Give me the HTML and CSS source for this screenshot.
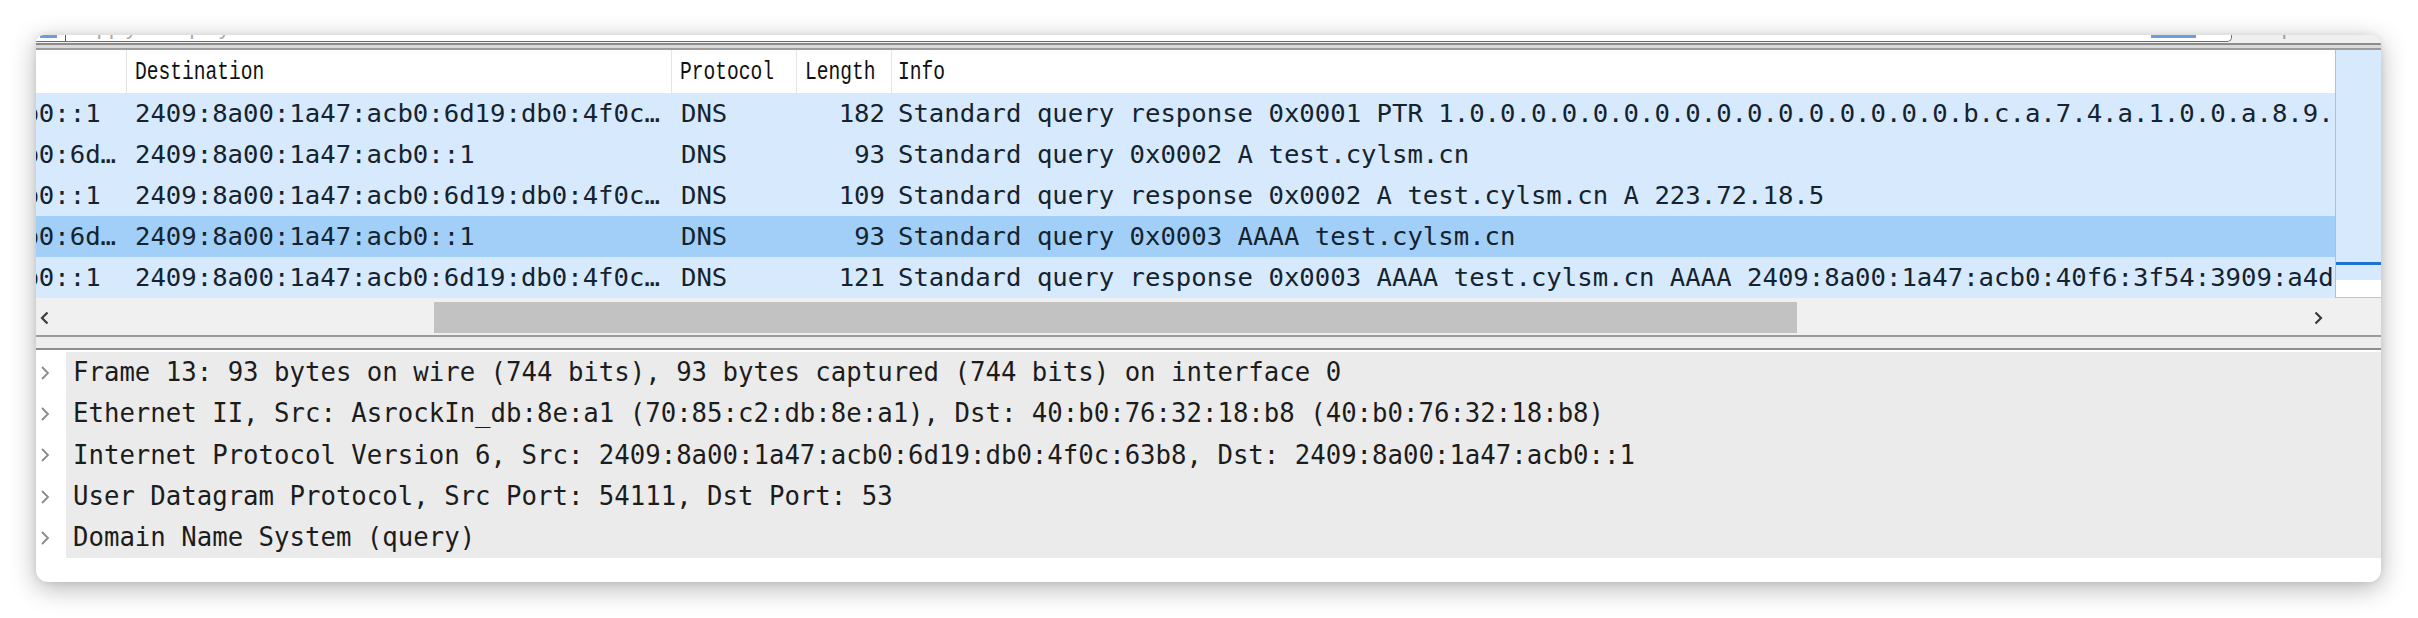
FILE: index.html
```html
<!DOCTYPE html>
<html>
<head>
<meta charset="utf-8">
<link rel="stylesheet" href="styles.css">
</head>
<body>
<div class="page">
  <div class="card">
    <div class="filterbar">
      <div class="fb-input">
        <div class="fb-bookmark"></div>
        <div class="fb-sep"></div>
        <div class="fb-placeholder"><span>Apply a display filter … &lt;Ctrl-/&gt;</span></div>
        <div class="fb-apply"></div>
      </div>
      <div class="fb-expr"><span>Expression…</span></div>
    </div>
    <div class="topline"></div>

    <div class="plist">
      <div class="plist-viewport">
        <div class="plist-inner">
          <div class="prow head">
            <div class="hc"><span class="ht">Source</span></div>
            <div class="hc"><span class="ht">Destination</span></div>
            <div class="hc"><span class="ht">Protocol</span></div>
            <div class="hc"><span class="ht">Length</span></div>
            <div class="hc"><span class="ht">Info</span></div>
          </div>
          <div class="prow dns">
            <div class="c src">2409:8a00:1a47:acb0::1</div>
            <div class="c dst">2409:8a00:1a47:acb0:6d19:db0:4f0c…</div>
            <div class="c proto">DNS</div>
            <div class="c len">182</div>
            <div class="c info">Standard query response 0x0001 PTR 1.0.0.0.0.0.0.0.0.0.0.0.0.0.0.0.0.b.c.a.7.4.a.1.0.0.a.8.9.0.4.2.ip6.arpa</div>
          </div>
          <div class="prow dns">
            <div class="c src">2409:8a00:1a47:acb0:6d…</div>
            <div class="c dst">2409:8a00:1a47:acb0::1</div>
            <div class="c proto">DNS</div>
            <div class="c len">93</div>
            <div class="c info">Standard query 0x0002 A test.cylsm.cn</div>
          </div>
          <div class="prow dns">
            <div class="c src">2409:8a00:1a47:acb0::1</div>
            <div class="c dst">2409:8a00:1a47:acb0:6d19:db0:4f0c…</div>
            <div class="c proto">DNS</div>
            <div class="c len">109</div>
            <div class="c info">Standard query response 0x0002 A test.cylsm.cn A 223.72.18.5</div>
          </div>
          <div class="prow dns selected">
            <div class="c src">2409:8a00:1a47:acb0:6d…</div>
            <div class="c dst">2409:8a00:1a47:acb0::1</div>
            <div class="c proto">DNS</div>
            <div class="c len">93</div>
            <div class="c info">Standard query 0x0003 AAAA test.cylsm.cn</div>
          </div>
          <div class="prow dns">
            <div class="c src">2409:8a00:1a47:acb0::1</div>
            <div class="c dst">2409:8a00:1a47:acb0:6d19:db0:4f0c…</div>
            <div class="c proto">DNS</div>
            <div class="c len">121</div>
            <div class="c info">Standard query response 0x0003 AAAA test.cylsm.cn AAAA 2409:8a00:1a47:acb0:40f6:3f54:3909:a4d1</div>
          </div>
        </div>
      </div>
      <div class="minimap">
        <div class="mm-fill"></div>
        <div class="mm-mark"></div>
        <div class="mm-fill2"></div>
        <div class="mm-empty"></div>
      </div>
    </div>

    <div class="hscroll">
      <div class="sbtn">
        <svg width="9" height="14" viewBox="0 0 9 14"><polyline points="7.5,1.5 2,7 7.5,12.5" fill="none" stroke="#3a3a3a" stroke-width="2.2"/></svg>
      </div>
      <div class="track"><div class="thumb"></div></div>
      <div class="sbtn">
        <svg width="9" height="14" viewBox="0 0 9 14"><polyline points="1.5,1.5 7,7 1.5,12.5" fill="none" stroke="#3a3a3a" stroke-width="2.2"/></svg>
      </div>
      <div class="corner"></div>
    </div>

    <div class="splitter"></div>

    <div class="details">
      <div class="drow"><div class="chev"><svg width="10" height="16" viewBox="0 0 10 16"><polyline points="2,2 8,8 2,14" fill="none" stroke="#8a8a8a" stroke-width="1.8"/></svg></div><div class="dtext">Frame 13: 93 bytes on wire (744 bits), 93 bytes captured (744 bits) on interface 0</div></div>
      <div class="drow"><div class="chev"><svg width="10" height="16" viewBox="0 0 10 16"><polyline points="2,2 8,8 2,14" fill="none" stroke="#8a8a8a" stroke-width="1.8"/></svg></div><div class="dtext">Ethernet II, Src: AsrockIn_db:8e:a1 (70:85:c2:db:8e:a1), Dst: 40:b0:76:32:18:b8 (40:b0:76:32:18:b8)</div></div>
      <div class="drow"><div class="chev"><svg width="10" height="16" viewBox="0 0 10 16"><polyline points="2,2 8,8 2,14" fill="none" stroke="#8a8a8a" stroke-width="1.8"/></svg></div><div class="dtext">Internet Protocol Version 6, Src: 2409:8a00:1a47:acb0:6d19:db0:4f0c:63b8, Dst: 2409:8a00:1a47:acb0::1</div></div>
      <div class="drow"><div class="chev"><svg width="10" height="16" viewBox="0 0 10 16"><polyline points="2,2 8,8 2,14" fill="none" stroke="#8a8a8a" stroke-width="1.8"/></svg></div><div class="dtext">User Datagram Protocol, Src Port: 54111, Dst Port: 53</div></div>
      <div class="drow"><div class="chev"><svg width="10" height="16" viewBox="0 0 10 16"><polyline points="2,2 8,8 2,14" fill="none" stroke="#8a8a8a" stroke-width="1.8"/></svg></div><div class="dtext">Domain Name System (query)</div></div>
    </div>
  </div>
</div>
</body>
</html>
```

FILE: styles.css
```css
* { box-sizing: border-box; }

html, body {
  margin: 0;
  padding: 0;
  background: #ffffff;
  width: 2418px;
  height: 618px;
  overflow: hidden;
  font-family: "Liberation Mono", "DejaVu Sans Mono", monospace;
}

.page {
  padding: 35px 37px 36px 36px;
}

.card {
  height: 547px;
  background: #ffffff;
  border-radius: 8px 10px 12px 12px;
  box-shadow: 0 6px 26px rgba(0, 0, 0, 0.30), 0 0 6px rgba(0, 0, 0, 0.08);
  overflow: hidden;
  display: flex;
  flex-direction: column;
}

/* clipped display-filter bar */
.filterbar {
  height: 8px;
  flex: none;
  display: flex;
  background: #f0f0f0;
  overflow: hidden;
}
.fb-input {
  width: 2196px;
  height: 7px;
  background: #ffffff;
  border-right: 1px solid #6e6e6e;
  border-bottom: 1px solid #6e6e6e;
  border-bottom-right-radius: 5px;
  display: flex;
  align-items: flex-start;
  overflow: hidden;
}
.fb-bookmark {
  margin-left: 4px;
  width: 17px;
  height: 3px;
  background: #6c9de0;
}
.fb-sep {
  margin-left: 8px;
  width: 1px;
  height: 7px;
  background: #5a5a5a;
}
.fb-placeholder {
  margin-left: 16px;
  flex: 1;
  height: 7px;
  overflow: hidden;
  color: #a8a8a8;
  font-family: "Liberation Sans", sans-serif;
  font-size: 22px;
  line-height: 24px;
}
.fb-placeholder span, .fb-expr span {
  display: block;
  margin-top: -20px;
  white-space: nowrap;
}
.fb-apply {
  width: 45px;
  height: 3px;
  margin-right: 35px;
  background: #6c9de0;
}
.fb-expr {
  flex: 1;
  height: 7px;
  overflow: hidden;
  padding-left: 24px;
  color: #a0a0a0;
  font-family: "Liberation Sans", sans-serif;
  font-size: 22px;
  line-height: 24px;
}

.topline {
  height: 7px;
  flex: none;
  border-top: 2px solid #8c8c8c;
  border-bottom: 2px solid #9c9c9c;
  background: #dadada;
}

/* packet list */
.plist {
  height: 248px;
  flex: none;
  display: flex;
}
.plist-viewport {
  flex: 1;
  overflow: hidden;
}
.plist-inner {
  margin-left: -282px;
  width: 3200px;
}
.prow {
  display: grid;
  grid-template-columns: 373px 545px 125px 95px 2062px;
  height: 41px;
  align-items: center;
  font-family: "DejaVu Sans Mono", "Liberation Mono", monospace;
  font-size: 25.65px;
  color: #14232e;
  white-space: nowrap;
}
.prow.head {
  height: 43px;
  background: #ffffff;
  align-items: stretch;
  color: #111111;
  font-family: "Liberation Mono", monospace;
}
.hc {
  border-right: 1px solid #e4e4e4;
  display: flex;
  align-items: center;
  padding-left: 8px;
  overflow: hidden;
}
.hc:first-child { padding-left: 7px; }
.hc:last-child { border-right: none; padding-left: 6px; }
.ht {
  display: inline-block;
  font-size: 19.6px;
  line-height: 20px;
  transform: scaleY(1.3);
}
.prow.dns { background: #d7e9fc; }
.prow.selected { background: #a2cff8; }

.c {
  overflow: hidden;
  line-height: 41px;
}
.c.src { padding-left: 7px; }
.c.dst { padding-left: 8px; }
.c.proto { padding-left: 9px; }
.c.len { text-align: right; padding-right: 7px; }
.c.info { padding-left: 6px; }

/* intelligent scrollbar / minimap */
.minimap {
  width: 46px;
  flex: none;
  border-left: 1px solid #b9bec4;
  border-bottom: 1px solid #c4c4c4;
  display: flex;
  flex-direction: column;
}
.mm-fill { height: 212px; background: #d7e9fc; }
.mm-mark { height: 3px; background: #1f72d4; }
.mm-fill2 { height: 15px; background: #d7e9fc; }
.mm-empty { flex: 1; background: #ffffff; }

/* horizontal scrollbar */
.hscroll {
  height: 37px;
  flex: none;
  display: grid;
  grid-template-columns: 16px 1fr 33px 46px;
  background: #f0f0f0;
}
.sbtn {
  display: flex;
  align-items: center;
  justify-content: center;
  padding-top: 2px;
}
.track {
  padding: 4px 0 2px 0;
}
.thumb {
  margin-left: 382px;
  width: 1363px;
  height: 31px;
  background: #c2c2c2;
}
.corner { background: #f0f0f0; }

.splitter {
  height: 15px;
  flex: none;
  border-top: 2px solid #9b9b9b;
  border-bottom: 2px solid #8e8e8e;
  background: #ededed;
}

/* packet details */
.details {
  padding-top: 2px;
  flex: 1;
  display: flex;
  flex-direction: column;
}
.drow {
  height: 41.3px;
  display: flex;
}
.chev {
  width: 30px;
  background: #ffffff;
  display: flex;
  align-items: center;
  padding-left: 4px;
}
.dtext {
  flex: 1;
  background: #ebebeb;
  padding-left: 7px;
  font-family: "DejaVu Sans Mono", "Liberation Mono", monospace;
  font-size: 25.7px;
  line-height: 41px;
  color: #1c1c1c;
  white-space: nowrap;
}
```
